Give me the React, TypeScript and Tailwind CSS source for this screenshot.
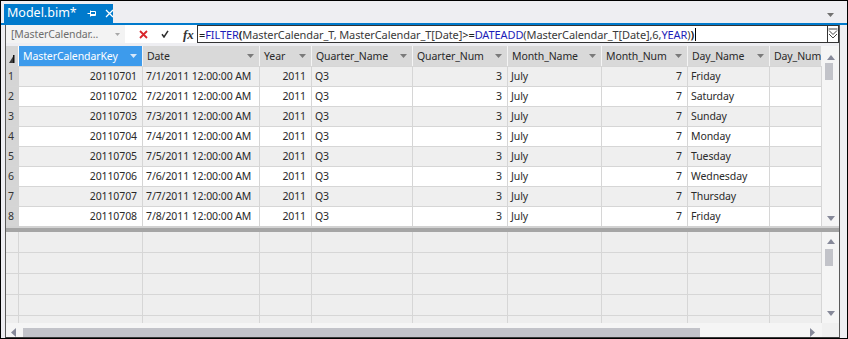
import React from "react";

const COLS = [
  { name: "MasterCalendarKey", w: "w-[124px]", align: "right" },
  { name: "Date", w: "w-[117px]", align: "left" },
  { name: "Year", w: "w-[52px]", align: "right" },
  { name: "Quarter_Name", w: "w-[101px]", align: "left" },
  { name: "Quarter_Num", w: "w-[95px]", align: "right" },
  { name: "Month_Name", w: "w-[94px]", align: "left" },
  { name: "Month_Num", w: "w-[86px]", align: "right" },
  { name: "Day_Name", w: "w-[82px]", align: "left" },
  { name: "Day_Num", w: "w-[52px]", align: "right" },
];

const DAYS = ["Friday", "Saturday", "Sunday", "Monday", "Tuesday", "Wednesday", "Thursday", "Friday"];

const ROWS = DAYS.map((d, i) => [
  `2011070${i + 1}`,
  `7/${i + 1}/2011 12:00:00 AM`,
  "2011",
  "Q3",
  "3",
  "July",
  "7",
  d,
  "",
]);

function Tri({ color = "#7d7d7d", dir = "down", w = 7, h = 4 }: { color?: string; dir?: string; w?: number; h?: number }) {
  let pts = `0,0 ${w},0 ${w / 2},${h}`;
  if (dir === "up") pts = `0,${h} ${w},${h} ${w / 2},0`;
  if (dir === "left") pts = `${w},0 ${w},${h} 0,${h / 2}`;
  if (dir === "right") pts = `0,0 0,${h} ${w},${h / 2}`;
  return (
    <svg width={w} height={h} viewBox={`0 0 ${w} ${h}`} className="block">
      <polygon points={pts} fill={color} />
    </svg>
  );
}

function VScroll({ h, thumbTop, thumbH, upTop, downBottom }: { h: string; thumbTop: string; thumbH: string; upTop: string; downBottom: string }) {
  return (
    <div className={`relative w-[17px] ${h} bg-[#f5f5f5] shrink-0`}>
      <div className={`absolute left-[5px] ${upTop}`}>
        <Tri dir="up" color="#868999" w={8} h={5} />
      </div>
      <div className={`absolute left-[3px] w-[8px] bg-[#c2c3c9] ${thumbTop} ${thumbH}`} />
      <div className={`absolute left-[5px] ${downBottom}`}>
        <Tri dir="down" color="#868999" w={8} h={5} />
      </div>
    </div>
  );
}

export default function App() {
  return (
    <div className="w-[848px] h-[339px] border border-black bg-[#eeeef2] flex flex-col overflow-hidden font-['Noto_Sans',sans-serif] text-[#1e1e1e]">
      {/* tab strip */}
      <div className="h-[22px] flex items-end pl-[3px] relative shrink-0">
        <div className="w-[109px] h-[19px] bg-[#007acc] text-white flex items-center pl-[3px] text-[12.5px] leading-none">
          <span>Model.bim*</span>
          <span className="ml-[10px]">
            <svg width="10" height="9" viewBox="0 0 10 9" className="block">
              <path d="M0.5 4.5 H3.5 M3.5 1.5 V7.5 M3.5 2.5 H8.5 V6.5 H3.5 M3.5 5.5 H8.5" stroke="white" strokeWidth="1" fill="none" />
            </svg>
          </span>
          <span className="ml-[8px]">
            <svg width="9" height="9" viewBox="0 0 9 9" className="block">
              <path d="M1 1 L8 8 M8 1 L1 8" stroke="white" strokeWidth="1.3" />
            </svg>
          </span>
        </div>
        <div className="absolute right-[13px] top-[12px]">
          <Tri color="#717171" w={7} h={4} />
        </div>
      </div>
      <div className="h-[2px] bg-[#007acc] shrink-0" />

      {/* body */}
      <div className="flex-1 flex ml-[4px] mr-[7px]">
        <div className="flex-1 flex flex-col border-x border-[#5a5a5a] border-b border-b-[#3a3a3a]">
          {/* formula row */}
          <div className="h-[18px] flex shrink-0 bg-white">
            <div className="w-[119px] h-full bg-[#f3f3f3] flex items-center pl-[5px] text-[10.5px] tracking-[-0.1px] text-[#6d6d6d] relative">
              <span className="leading-none">[MasterCalendar…</span>
              <div className="absolute right-[5px] top-[8px]">
                <Tri color="#a8a8a8" w={5} h={3} />
              </div>
            </div>
            <div className="w-[72px] h-full flex items-center">
              <svg width="9" height="9" viewBox="0 0 9 9" className="ml-[14px] block">
                <path d="M1 1 L8 8 M8 1 L1 8" stroke="#d9262c" strokeWidth="1.8" />
              </svg>
              <svg width="8" height="8" viewBox="0 0 8 8" className="ml-[13px] block">
                <path d="M1 4.2 L3 7 L7 0.8" stroke="#2d2d2d" strokeWidth="1.5" fill="none" />
              </svg>
              <span className="ml-[14px] font-['Liberation_Serif',serif] italic font-bold text-[13px] leading-none text-[#333]">fx</span>
            </div>
            <div className="flex-1 h-full border border-r-0 border-[#333] flex items-center pl-[1px] text-[11px] tracking-[-0.1px] leading-none whitespace-nowrap overflow-hidden">
              <span className="text-[#1e1e1e]">=</span>
              <span className="text-[#1c1cb8]">FILTER</span>
              <span className="font-bold">(</span>
              <span className="text-[#3a3a3a]">MasterCalendar_T, MasterCalendar_T[Date]</span>
              <span>&gt;=</span>
              <span className="text-[#1c1cb8]">DATEADD</span>
              <span className="text-[#3a3a3a]">(MasterCalendar_T[Date],6,</span>
              <span className="text-[#1c1cb8]">YEAR</span>
              <span className="text-[#3a3a3a]">)</span>
              <span className="font-bold">)</span>
              <span className="inline-block w-[1px] h-[13px] bg-black ml-[1px]" />
            </div>
            <div className="w-[12px] h-full border border-[#333] bg-white flex items-center justify-center">
              <svg width="10" height="12" viewBox="0 0 10 12" className="block">
                <path d="M0.5 1 H9.5 M1 2.5 L5 6.5 L9 2.5 M1 6 L5 10 L9 6" stroke="#444" strokeWidth="1" fill="none" />
              </svg>
            </div>
          </div>
          <div className="h-[3px] shrink-0" />

          {/* upper pane */}
          <div className="flex shrink-0">
            <div className="w-[816px] flex flex-col overflow-hidden">
              {/* header */}
              <div className="h-[20px] flex bg-[#d9d9d9] text-[10.5px] tracking-[-0.1px]">
                <div className="w-[13px] h-full shrink-0 border-r border-white flex items-end justify-center pb-[3px] bg-[#d6d6d6]">
                  <svg width="6" height="8" viewBox="0 0 6 8" className="block">
                    <polygon points="0,8 5,8 5,0" fill="#3a3a3a" />
                    <rect x="4" y="0" width="1.5" height="8" fill="#111" />
                  </svg>
                </div>
                {COLS.map((c, i) => (
                  <div
                    key={c.name}
                    className={`${c.w} h-full shrink-0 border-r border-[#f4f4f4] flex items-center justify-between pl-[4px] pr-[5px] overflow-hidden ${i === 0 ? "bg-[#3d9bec] text-white" : "text-[#2a2a2a]"}`}
                  >
                    <span className="whitespace-nowrap leading-none">{c.name}</span>
                    {i < 8 && <Tri color={i === 0 ? "#d7e8f9" : "#7a7a7a"} w={7} h={4} />}
                  </div>
                ))}
              </div>
              {ROWS.map((r, ri) => (
                <div key={ri} className={`h-[20px] flex border-t border-[#d6d6d6] text-[10.5px] tracking-[-0.1px] ${ri % 2 === 0 ? "bg-[#efefef]" : "bg-white"}`}>
                  <div className="w-[13px] h-full shrink-0 bg-[#d5d5d5] border-r border-[#d5d5d5] flex items-center pl-[2px] text-[#333]">
                    <span className="leading-none">{ri + 1}</span>
                  </div>
                  {COLS.map((c, ci) => (
                    <div
                      key={ci}
                      className={`${c.w} h-full shrink-0 border-r border-[#d6d6d6] flex items-center ${c.align === "right" ? "justify-end pr-[5px]" : "justify-start pl-[3px]"} text-[#2a2a2a]`}
                    >
                      <span className="whitespace-nowrap leading-none">{r[ci]}</span>
                    </div>
                  ))}
                </div>
              ))}
            </div>
            <VScroll h="h-[180px]" upTop="top-[9px]" thumbTop="top-[17px]" thumbH="h-[17px]" downBottom="bottom-[5px]" />
          </div>

          {/* separator */}
          <div className="h-[6px] shrink-0 border-t-2 border-[#d2d2d2] bg-[#a5a5a5]" />

          {/* lower pane */}
          <div className="h-[91px] flex shrink-0">
            <div className="w-[816px] flex flex-col overflow-hidden bg-[#eeeeee]">
              {[0, 1, 2, 3, 4].map((ri) => (
                <div key={ri} className="h-[21px] shrink-0 flex border-b border-[#d6d6d6]">
                  <div className="w-[13px] h-full shrink-0 border-r border-[#d6d6d6]" />
                  {COLS.map((c, ci) => (
                    <div key={ci} className={`${c.w} h-full shrink-0 border-r border-[#d6d6d6]`} />
                  ))}
                </div>
              ))}
            </div>
            <VScroll h="h-[91px]" upTop="top-[7px]" thumbTop="top-[17px]" thumbH="h-[17px]" downBottom="bottom-[7px]" />
          </div>

          {/* horizontal scrollbar */}
          <div className="flex-1 flex">
            <div className="w-[816px] h-full bg-[#f5f5f5] relative">
              <div className="absolute left-[5px] top-[5px]">
                <Tri dir="left" color="#868999" w={5} h={9} />
              </div>
              <div className="absolute left-[17px] top-[5px] w-[677px] h-[9px] bg-[#c2c3c9]" />
              <div className="absolute left-[804px] top-[5px]">
                <Tri dir="right" color="#868999" w={5} h={9} />
              </div>
            </div>
            <div className="flex-1 h-full bg-[#f0f0f0]" />
          </div>
        </div>
      </div>
    </div>
  );
}
